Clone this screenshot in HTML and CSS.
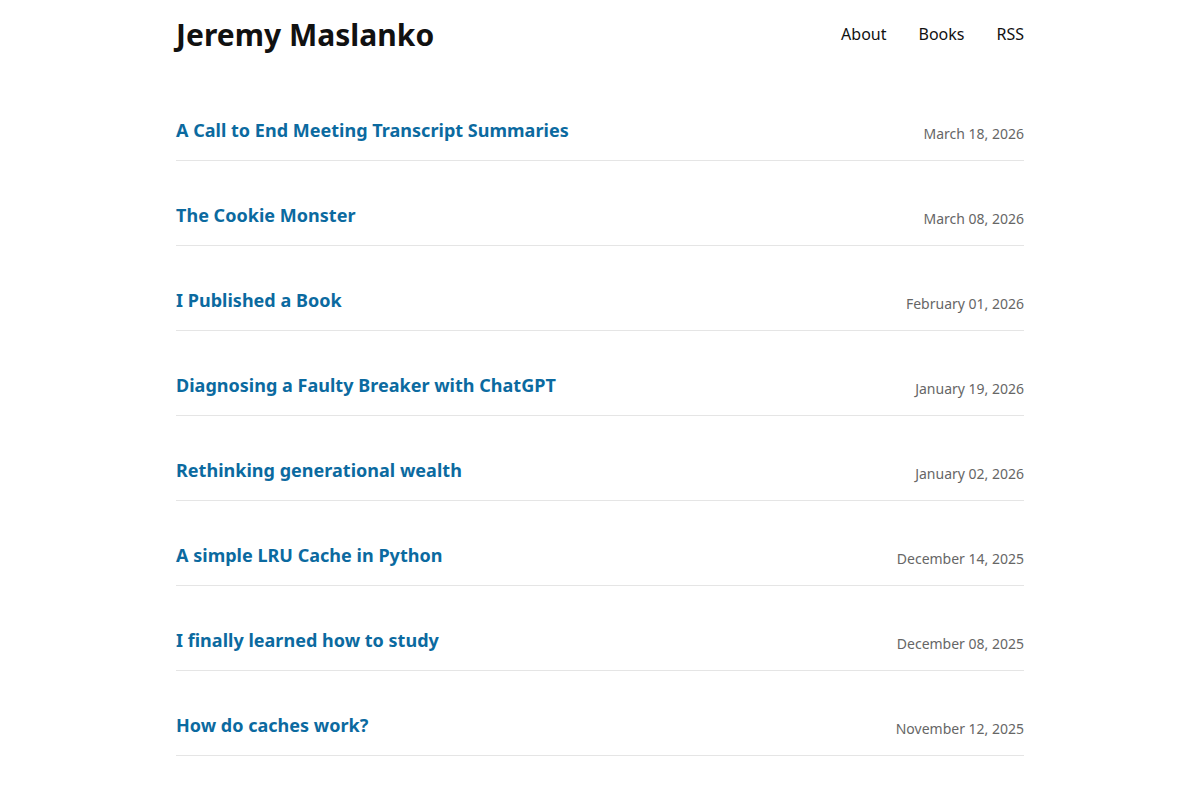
FILE: index.html
```html
<!DOCTYPE html>
<html>
<head>
<meta charset="utf-8">
<link rel="stylesheet" href="styles.css">
</head>
<body>
<div class="wrap">
  <header class="header">
    <a class="brand" href="#">Jeremy Maslanko</a>
    <nav class="nav">
      <a href="#">About</a>
      <a href="#">Books</a>
      <a href="#">RSS</a>
    </nav>
  </header>
  <main class="posts">
    <div class="post"><a class="post-title" href="#">A Call to End Meeting Transcript Summaries</a><span class="post-date">March 18, 2026</span></div>
    <div class="post"><a class="post-title" href="#">The Cookie Monster</a><span class="post-date">March 08, 2026</span></div>
    <div class="post"><a class="post-title" href="#">I Published a Book</a><span class="post-date">February 01, 2026</span></div>
    <div class="post"><a class="post-title" href="#">Diagnosing a Faulty Breaker with ChatGPT</a><span class="post-date">January 19, 2026</span></div>
    <div class="post"><a class="post-title" href="#">Rethinking generational wealth</a><span class="post-date">January 02, 2026</span></div>
    <div class="post"><a class="post-title" href="#">A simple LRU Cache in Python</a><span class="post-date">December 14, 2025</span></div>
    <div class="post"><a class="post-title" href="#">I finally learned how to study</a><span class="post-date">December 08, 2025</span></div>
    <div class="post"><a class="post-title" href="#">How do caches work?</a><span class="post-date">November 12, 2025</span></div>
  </main>
</div>
</body>
</html>
```
FILE: styles.css
```css
html, body {
  margin: 0;
  padding: 0;
  background: #fff;
  font-family: "Noto Sans", "Open Sans", sans-serif;
  color: #111;
}
a { text-decoration: none; }
.wrap {
  width: 848px;
  margin: 0 auto;
}
.header {
  display: flex;
  justify-content: space-between;
  align-items: center;
  height: 68px;
}
.brand {
  font-size: 30px;
  font-weight: 700;
  color: #111;
  letter-spacing: 0.03px;
}
.nav {
  display: flex;
  gap: 32px;
}
.nav a {
  font-size: 16px;
  color: #111;
}
.posts {
  padding-top: 8px;
}
.post {
  display: flex;
  justify-content: space-between;
  align-items: flex-end;
  padding: 41px 0 16px;
  border-bottom: 1px solid #e5e5e5;
}
.post-title {
  font-size: 18px;
  line-height: 27px;
  font-weight: 700;
  color: #0b6aa0;
  letter-spacing: 0.02px;
}
.post-date {
  font-size: 14px;
  line-height: 21px;
  color: #666;
}
```
